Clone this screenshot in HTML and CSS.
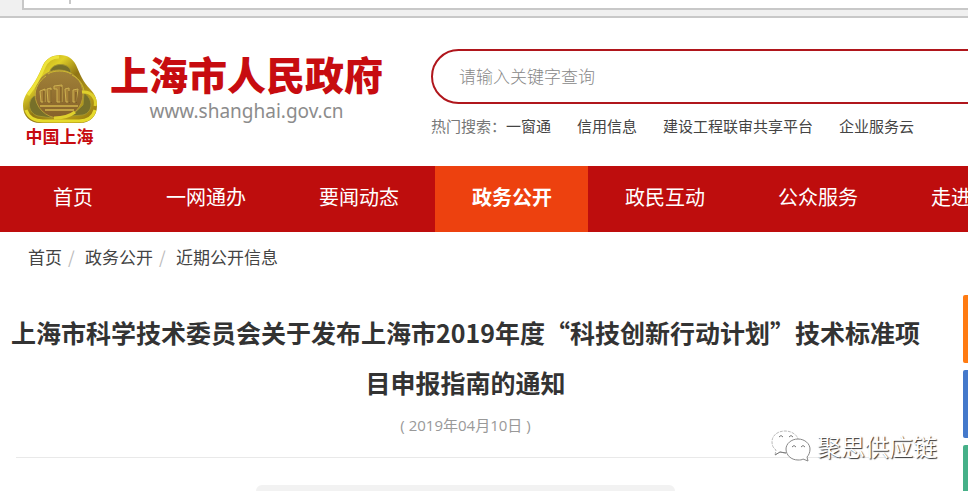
FILE: index.html
```html
<!DOCTYPE html>
<html lang="zh-CN">
<head>
    <meta charset="UTF-8">
    <meta name="viewport" content="width=device-width, initial-scale=1.0">
    <title>上海市人民政府</title>
    <link rel="stylesheet" href="styles.css">
</head>
<body>
    <!-- 顶部灰条 -->
    <div class="topbar">
        <div class="topbar-field"><span class="caret"></span></div>
    </div>

    <!-- 页头 -->
    <header class="header">
        <a class="logo" href="#">
            <span class="emblem">
                <svg class="emblem-icon" viewBox="0 0 74 68" aria-hidden="true">
                    <defs>
                        <linearGradient id="gold" x1="0" y1="0" x2="1" y2="1">
                            <stop offset="0" stop-color="#a58a10"/>
                            <stop offset="0.3" stop-color="#e0d028"/>
                            <stop offset="0.5" stop-color="#8f7414"/>
                            <stop offset="0.75" stop-color="#b89c1a"/>
                            <stop offset="1" stop-color="#8a6c0c"/>
                        </linearGradient>
                        <linearGradient id="disc" x1="0" y1="0" x2="0" y2="1">
                            <stop offset="0" stop-color="#a18238"/>
                            <stop offset="1" stop-color="#86602a"/>
                        </linearGradient>
                    </defs>
                    <path d="M37 0C45 0 50 4 53 10C57 19 60 27 67 34C72 39 74 44 74 51C74 61 67 68 57 68H17C7 68 0 61 0 51C0 44 3 39 6 35C13 26 16 19 20 10C23 4 29 0 37 0Z" fill="url(#gold)"/>
                    <path d="M27 17C28 7 47 7 48 17L44 20H31ZM13 40C4 44 4 58 15 61L29 63L15 50ZM61 38C70 43 71 57 60 60L48 61L60 50Z" fill="#77702a" stroke="#a3952e" stroke-width="1"/>
                    <circle cx="36" cy="39" r="24" fill="url(#disc)" stroke="#b79d36" stroke-width="1"/>
                    <path d="M25 19C30 15 43 15 48 19M49 20C57 24 61 31 61 38M23 21C16 26 12 33 12 41" fill="none" stroke="#cdb930" stroke-width="1"/>
                    <path d="M59 37C68 36 74 43 72 51M31 63C40 63 47 61 52 57" fill="none" stroke="#dfd02c" stroke-width="3"/>
                    <path d="M17 36L22 34V47H18ZM24 34L28 33V47H25ZM31 31L39 30V47H34V34H31ZM42 34L46 33V47H43ZM50 35L55 34L53 47H50Z" fill="#a78137" stroke="#cdb250" stroke-width="1"/>
                    <path d="M21 36V48M28 35V48M38 32V48M46 36V48M53 37V48" stroke="#6b4b1e" stroke-width="1"/>
                    <path d="M17 51H55M22 55H51" stroke="#c0a144" stroke-width="2"/>
                    <path d="M3 55C6 64 13 66 20 66H56C64 66 70 62 72 55" fill="none" stroke="#e6da2c" stroke-width="3"/>
                    <path d="M5 40C12 31 17 22 21 12C24 5 30 2 36 2" fill="none" stroke="#eee43a" stroke-width="3"/>
                </svg>
                <span class="emblem-text">中国上海</span>
            </span>
            <span class="site">
                <span class="site-name">上海市人民政府</span>
                <span class="site-url">www.shanghai.gov.cn</span>
            </span>
        </a>
        <div class="search">
            <input class="search-input" type="text" placeholder="请输入关键字查询" aria-label="请输入关键字查询">
            <div class="hot">
                <span class="hot-label">热门搜索：</span>
                <div class="hot-links">
                    <a href="#">一窗通</a>
                    <a href="#">信用信息</a>
                    <a href="#">建设工程联审共享平台</a>
                    <a href="#">企业服务云</a>
                </div>
            </div>
        </div>
    </header>

    <!-- 主导航 -->
    <nav class="nav">
        <a href="#">首页</a>
        <a href="#">一网通办</a>
        <a href="#">要闻动态</a>
        <a class="active" href="#">政务公开</a>
        <a href="#">政民互动</a>
        <a href="#">公众服务</a>
        <a href="#">走进上海</a>
    </nav>

    <!-- 面包屑 -->
    <div class="breadcrumb">
        <a href="#">首页</a>
        <span class="sep">/</span>
        <a href="#">政务公开</a>
        <span class="sep">/</span>
        <a href="#">近期公开信息</a>
    </div>

    <!-- 正文 -->
    <main class="article">
        <h1 class="title">上海市科学技术委员会关于发布上海市2019年度“科技创新行动计划”技术标准项目申报指南的通知</h1>
        <p class="date">( 2019年04月10日 )</p>
        <div class="panel"></div>
    </main>

    <!-- 右侧浮动条 -->
    <aside class="side">
        <div class="side-item orange"></div>
        <div class="side-item blue"></div>
        <div class="side-item green"></div>
    </aside>

    <!-- 公众号水印 -->
    <div class="watermark">
        <svg class="wechat" viewBox="0 0 40 32" aria-hidden="true">
            <path d="M15 23C12 23 10 22 9 22L4 25L5 20C2 18 1 15 1 12C1 5 7 1 14 1C21 1 26 5 27 9" fill="#fff" stroke="#bbb" stroke-width="1" stroke-dasharray="3 1"/>
            <path d="M4 25L9 22L15 23" fill="none" stroke="#777" stroke-width="1"/>
            <path d="M27 9C20 9 15 14 15 19C15 25 20 30 27 30C29 30 31 30 32 29L37 31L36 27C38 25 39 22 39 19C39 14 34 9 27 9Z" fill="#fff" stroke="#888" stroke-width="1"/>
            <path d="M8 7Q10 4 12 7M18 7Q20 4 22 7M21 17Q23 14 25 17M30 17Q32 14 34 17" fill="none" stroke="#777" stroke-width="1"/>
        </svg>
        <span class="watermark-text">聚思供应链</span>
    </div>
</body>
</html>
```
FILE: styles.css
```css
/* 基础样式 */
* {
    box-sizing: border-box;
}

body {
    margin: 0;
    position: relative;
    height: 100vh;
    overflow: hidden;
    background-color: #fff;
    color: #444;
    font-family: "Noto Sans CJK SC", sans-serif;
}

a {
    color: inherit;
    text-decoration: none;
}

/* 顶部灰条 */
.topbar {
    height: 18px;
    padding-left: 22px;
    background-color: #f0f0f0;
    border-bottom: 2px solid #c8c8c8;
}

.topbar-field {
    height: 10px;
    padding-left: 45px;
    background-color: #fff;
    border-left: 2px solid #c8c8c8;
    border-bottom: 2px solid #c8c8c8;
}

.caret {
    display: block;
    width: 2px;
    height: 4px;
    background-color: #c8c8c8;
}

/* 页头 */
.header {
    display: flex;
    height: 148px;
    padding-left: 22px;
    overflow: hidden;
}

.logo {
    display: flex;
    gap: 13px;
    width: 409px;
    flex-shrink: 0;
    color: #c70c10;
    font-weight: bold;
    white-space: nowrap;
}

.emblem {
    display: flex;
    flex-direction: column;
    align-items: center;
    width: 75px;
    padding-top: 37px;
}

.emblem-icon {
    width: 74px;
    height: 68px;
}

.emblem-text {
    margin-top: 3px;
    font-size: 17px;
    line-height: 20px;
}

.site {
    display: flex;
    flex-direction: column;
    align-items: center;
    padding-top: 28px;
}

.site-name {
    font-size: 39px;
    font-weight: 900;
    line-height: 54px;
}

.site-url {
    color: #8c8c8c;
    font-family: "Noto Sans", sans-serif;
    font-size: 19px;
    font-weight: normal;
    line-height: 22px;
}

/* 搜索 */
.search {
    flex: 1;
    min-width: 0;
    padding-top: 31px;
}

.search-input {
    display: block;
    width: calc(100% + 60px);
    height: 55px;
    padding: 0 26px 2px;
    border: 2px solid #b0161c;
    border-radius: 28px;
    background-color: #fff;
    color: #444;
    font-family: inherit;
    font-size: 17px;
    font-weight: 300;
    outline: none;
}

.search-input::placeholder {
    color: #888;
    opacity: 1;
}

.hot {
    display: flex;
    margin-top: 11px;
    font-size: 15px;
    line-height: 22px;
    white-space: nowrap;
}

.hot-label {
    color: #777;
}

.hot-links {
    display: flex;
    gap: 26px;
}

/* 主导航 */
.nav {
    display: flex;
    height: 66px;
    padding-left: 16px;
    overflow: hidden;
    background-color: #be0d0d;
    color: #fff;
    font-size: 20px;
    line-height: 62px;
    white-space: nowrap;
}

.nav a {
    flex-shrink: 0;
    padding: 0 36px 0 37px;
}

.nav .active {
    background-color: #ed410f;
    font-weight: bold;
}

/* 面包屑 */
.breadcrumb {
    display: flex;
    padding: 13px 28px 15px;
    font-size: 17px;
    line-height: 24px;
}

.sep {
    width: 23px;
    padding-left: 6px;
    color: #bbb;
}

/* 正文 */
.article {
    padding: 23px 47px 0 10px;
    text-align: center;
}

.title {
    margin: 0;
    color: #333;
    font-size: 25px;
    line-height: 50px;
}

.date {
    margin: 0 6px;
    padding: 6px 0 20px;
    border-bottom: 1px solid #e9e9e9;
    color: #999;
    font-family: "Open Sans", "Noto Sans CJK SC", sans-serif;
    font-size: 15px;
    line-height: 24px;
}

.panel {
    width: 46%;
    height: 20px;
    margin: 27px auto 0;
    border-radius: 6px 6px 0 0;
    background-color: #f2f2f2;
}

/* 右侧浮动条 */
.side {
    position: absolute;
    top: 295px;
    right: 0;
    bottom: 0;
    overflow: hidden;
    display: flex;
    flex-direction: column;
    gap: 7px;
}

.side-item {
    flex-shrink: 0;
    width: 5px;
    height: 68px;
    border-radius: 2px 0 0 2px;
}

.orange {
    background-color: #ff7b12;
}

.blue {
    background-color: #4479cb;
}

.green {
    background-color: #46b088;
}

/* 公众号水印 */
.watermark {
    position: absolute;
    right: 31px;
    bottom: 28px;
    display: flex;
    align-items: center;
    gap: 6px;
}

.wechat {
    width: 40px;
    height: 32px;
}

.watermark-text {
    color: #fff;
    font-size: 24px;
    line-height: 34px;
    text-shadow: 1px 1px 1px #333;
}
```
